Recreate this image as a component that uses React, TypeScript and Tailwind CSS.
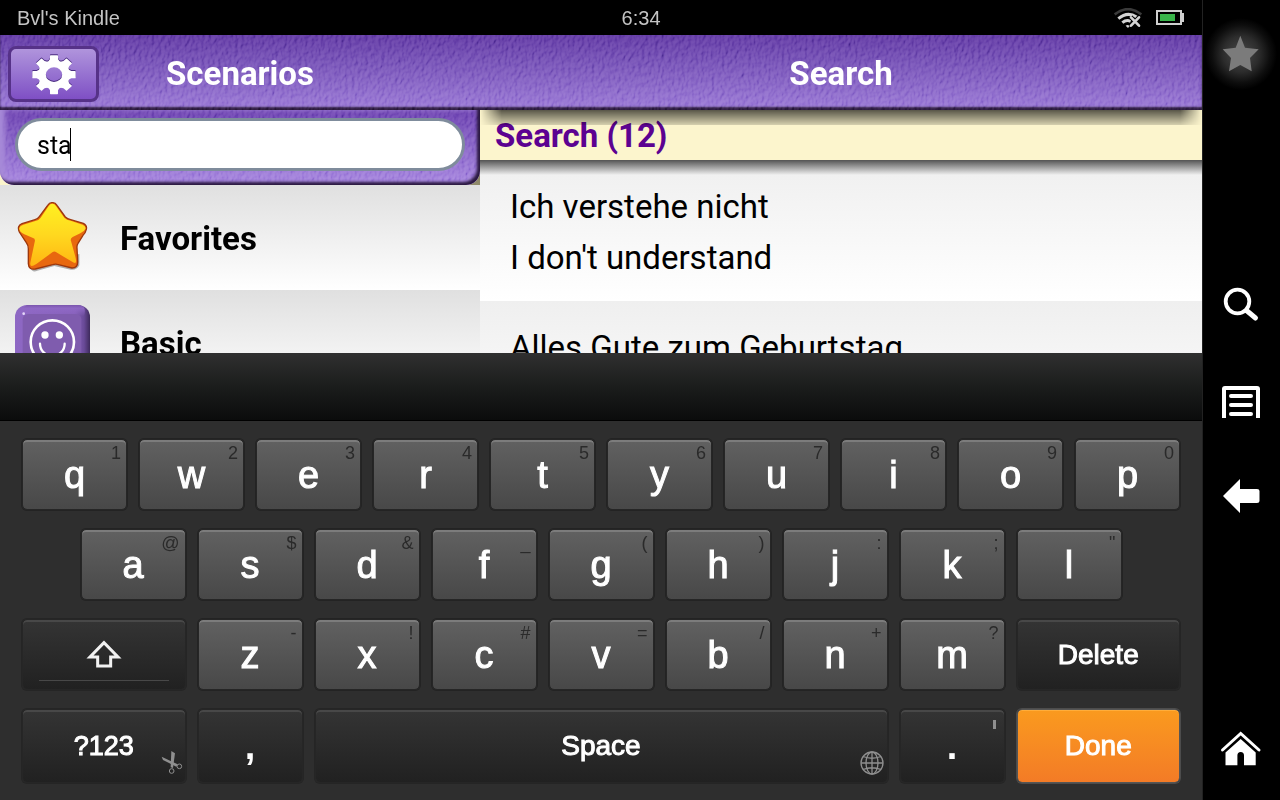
import { useState, type ReactNode } from 'react';

type KeyDef = { label: string; hint?: string };

const ROW_ONE: KeyDef[] = [
  { label: 'q', hint: '1' },
  { label: 'w', hint: '2' },
  { label: 'e', hint: '3' },
  { label: 'r', hint: '4' },
  { label: 't', hint: '5' },
  { label: 'y', hint: '6' },
  { label: 'u', hint: '7' },
  { label: 'i', hint: '8' },
  { label: 'o', hint: '9' },
  { label: 'p', hint: '0' },
];

const ROW_TWO: KeyDef[] = [
  { label: 'a', hint: '@' },
  { label: 's', hint: '$' },
  { label: 'd', hint: '&' },
  { label: 'f', hint: '_' },
  { label: 'g', hint: '(' },
  { label: 'h', hint: ')' },
  { label: 'j', hint: ':' },
  { label: 'k', hint: ';' },
  { label: 'l', hint: '"' },
];

const ROW_THREE: KeyDef[] = [
  { label: 'z', hint: '-' },
  { label: 'x', hint: '!' },
  { label: 'c', hint: '#' },
  { label: 'v', hint: '=' },
  { label: 'b', hint: '/' },
  { label: 'n', hint: '+' },
  { label: 'm', hint: '?' },
];

const PHRASES = [
  ['Ich verstehe nicht', "I don't understand"],
  ['Alles Gute zum Geburtstag'],
];

/* Embossed leather grain laid over the purple surfaces. */
function Grain({ id }: { id: string }) {
  return (
    <svg aria-hidden="true" className="pointer-events-none absolute inset-0 h-full w-full opacity-50 mix-blend-soft-light">
      <filter id={id} x="0" y="0" width="100%" height="100%">
        <feTurbulence type="fractalNoise" baseFrequency="0.3 0.2" numOctaves="2" seed="7" result="noise" />
        <feDiffuseLighting in="noise" surfaceScale="2" diffuseConstant="0.7" lightingColor="#ffffff">
          <feDistantLight azimuth="215" elevation="42" />
        </feDiffuseLighting>
      </filter>
      <rect width="100%" height="100%" filter={`url(#${id})`} />
    </svg>
  );
}

function WifiOffIcon() {
  return (
    <svg aria-hidden="true" viewBox="0 0 84 60" className="h-5 w-7" fill="none" strokeLinecap="butt">
      <path d="M2 19Q42-12 82 19" stroke="#3a3a3a" strokeWidth="8" />
      <path d="M13 32Q40 9 68 27" stroke="#d4d4d4" strokeWidth="9" />
      <path d="M25 44Q37 34 50 40" stroke="#d4d4d4" strokeWidth="9" />
      <path d="M35 53Q41 48 47 54L42 60Z" fill="#d4d4d4" />
      <path d="M50 27L76 54M76 27L50 54" stroke="#000" strokeWidth="14" />
      <path d="M51 28L75 53M75 28L51 53" stroke="#d4d4d4" strokeWidth="8" strokeLinecap="round" />
    </svg>
  );
}

function BatteryIcon() {
  return (
    <svg aria-hidden="true" viewBox="0 0 28 15" className="h-[15px] w-7">
      <path d="M1 1H25V14H1Z" fill="none" stroke="#cfcfcf" strokeWidth="2" />
      <path d="M25 3H28V12H25Z" fill="#cfcfcf" />
      <path d="M4 4H19V11H4Z" fill="#39b54a" />
    </svg>
  );
}

function GearIcon() {
  const teeth = [0, 45, 90, 135, 180, 225, 270, 315];
  return (
    <svg aria-hidden="true" viewBox="-72 -72 144 144" className="h-12 w-12 drop-shadow-[0_-1px_0_#4a2c80]">
      <g transform="translate(0 2) scale(1 .9)">
        <circle r="36" fill="none" stroke="#fff" strokeWidth="23" />
        {teeth.map((angle) => (
          <path key={angle} d="M-18-42L-12-52V-63Q-12-65-10-65H10Q12-65 12-63V-52L18-42Z" fill="#fff" transform={`rotate(${angle})`} />
        ))}
      </g>
    </svg>
  );
}

function GoldStarIcon() {
  return (
    <svg aria-hidden="true" viewBox="45 60 225 225" className="h-[75px] w-[75px] shrink-0">
      <defs>
        <linearGradient id="gold" x1="0" y1="0" x2="0" y2="1">
          <stop offset="0" stopColor="#fff021" />
          <stop offset="0.5" stopColor="#ffd81f" />
          <stop offset="1" stopColor="#ffb612" />
        </linearGradient>
      </defs>
      <path
        d="M88 262Q98 280 112 272L163 258L212 269Q230 272 238 256L238 222Z"
        fill="#000"
        opacity="0.3"
      />
      <path
        d="M156 68Q165 66 171 76L196 111Q202 117 212 119L250 130Q262 136 259 148Q256 160 249 166L234 190Q230 196 231 204L233 246Q233 264 216 264L172 253Q165 251 158 254L106 267Q86 270 85 251V206Q85 196 79 188L58 156Q50 137 66 131L105 119Q113 117 118 110L143 76Q149 67 156 68Z"
        fill="#e8680f"
        stroke="#9c370c"
        strokeWidth="4"
      />
      <path
        d="M156 71Q163 70 168 78L193 113Q200 120 212 122L248 134Q259 139 256 147Q253 154 241 160L218 171Q210 175 213 183L226 230Q233 255 219 247L169 217Q163 212 157 217L109 252Q88 266 91 248L104 186Q107 176 99 174L73 163Q56 154 58 144Q60 136 70 134L106 123Q117 121 122 113L146 78Q151 71 156 71Z"
        fill="url(#gold)"
      />
    </svg>
  );
}

function SmileyTileIcon() {
  return (
    <svg aria-hidden="true" viewBox="45 375 225 225" className="h-[75px] w-[75px] shrink-0">
      <defs>
        <linearGradient id="tile" x1="0" y1="0" x2="1" y2="0">
          <stop offset="0" stopColor="#8e68c4" />
          <stop offset="0.8" stopColor="#8660ba" />
          <stop offset="0.92" stopColor="#694a98" />
          <stop offset="1" stopColor="#3e2a5c" />
        </linearGradient>
        <linearGradient id="tileTop" x1="0" y1="0" x2="0" y2="1">
          <stop offset="0" stopColor="#7a55ad" />
          <stop offset="0.3" stopColor="#9069c6" stopOpacity="0.9" />
          <stop offset="1" stopColor="#9069c6" stopOpacity="0" />
        </linearGradient>
      </defs>
      <rect x="45" y="375" width="225" height="225" rx="36" fill="url(#tile)" />
      <path d="M81 375H234Q262 377 252 408H63Q45 400 81 375Z" fill="url(#tileTop)" />
      <rect x="68" y="402" width="176" height="180" rx="16" fill="#7f5cae" />
      <circle cx="71" cy="401" r="4" fill="#e6d8fa" />
      <circle cx="157" cy="486" r="65" fill="none" stroke="#fff" strokeWidth="8" />
      <circle cx="135" cy="465" r="11" fill="#fff" />
      <circle cx="178" cy="465" r="11" fill="#fff" />
      <path d="M120 491A37 37 0 0 0 194 491" fill="none" stroke="#fff" strokeWidth="7" strokeLinecap="round" />
    </svg>
  );
}

function Key({ label, hint, className = 'col-span-2' }: KeyDef & { className?: string }) {
  return (
    <button
      type="button"
      className={`relative flex h-[71px] items-center justify-center rounded-[5px] border border-[#262626] bg-linear-to-b from-[#616161] to-[#484848] bg-clip-padding text-[38px] leading-none text-white shadow-[inset_0_2px_0_#7c7c7c,0_0_0_1px_#232323] [-webkit-text-stroke:1px_white] ${className}`}
    >
      {label}
      {hint && (
        <span className="absolute top-1 right-[5px] text-[18px] leading-none text-[#2a2a2a] [-webkit-text-stroke:0px]">{hint}</span>
      )}
    </button>
  );
}

function DarkKey({ label, className, children }: { label: string; className: string; children: ReactNode }) {
  return (
    <button
      type="button"
      aria-label={label}
      className={`relative flex items-center justify-center rounded-[5px] border border-[#262626] bg-linear-to-b from-[#343434] to-[#212121] bg-clip-padding leading-none text-white shadow-[inset_0_2px_0_#484848,0_0_0_1px_#252525] ${className}`}
    >
      {children}
    </button>
  );
}

function Keyboard() {
  return (
    <section aria-label="Keyboard" className="shrink-0">
      <div className="h-[68px] border-b border-black bg-linear-to-b from-[#303030] via-[#1b1d1c] via-50% to-[#0b0c0c]" />
      <div className="grid grid-cols-20 gap-x-[12px] gap-y-[19px] bg-[#2e2e2e] px-[22px] pt-[18px] pb-[17px]">
        {ROW_ONE.map((key) => (
          <Key key={key.label} {...key} />
        ))}
        {ROW_TWO.map((key, index) => (
          <Key key={key.label} {...key} className={index === 0 ? 'col-span-2 col-start-2' : 'col-span-2'} />
        ))}
        <DarkKey label="Shift" className="col-span-3 col-start-1 h-[71px]">
          <svg aria-hidden="true" viewBox="246 113 120 96" className="h-8 w-10">
            <path d="M306 124L264 167H287V194H326V167H348Z" fill="none" stroke="#f2f2f2" strokeWidth="9" />
          </svg>
          <span className="absolute inset-x-4 bottom-2 h-px bg-[#484848]" />
        </DarkKey>
        {ROW_THREE.map((key) => (
          <Key key={key.label} {...key} />
        ))}
        <DarkKey label="Delete" className="col-span-3 h-[71px] text-[28px] [-webkit-text-stroke:1px_white]">
          Delete
        </DarkKey>
        <DarkKey label="Symbols" className="col-span-3 h-[74px] text-[27px] [-webkit-text-stroke:1px_white]">
          ?123
          <svg aria-hidden="true" viewBox="480 450 66 75" className="absolute right-0.5 bottom-[7px] h-[25px] w-[22px]">
            <path d="M511 453L522 460L516 504L509 502Z" fill="#8f8f8f" />
            <path d="M482 470L486 480L526 500L530 493Z" fill="#8f8f8f" />
            <circle cx="512" cy="513" r="7" fill="none" stroke="#8f8f8f" strokeWidth="3" />
            <circle cx="535" cy="499" r="7" fill="none" stroke="#8f8f8f" strokeWidth="3" />
          </svg>
        </DarkKey>
        <DarkKey label="Comma" className="col-span-2 h-[74px] text-[38px] font-bold">
          ,
        </DarkKey>
        <DarkKey label="Space" className="col-span-10 h-[74px] text-[28px] [-webkit-text-stroke:1px_white]">
          Space
          <svg aria-hidden="true" viewBox="0 0 24 24" className="absolute right-[3px] bottom-[7px] h-6 w-6" fill="none" stroke="#8f8f8f" strokeWidth="1.3">
            <circle cx="12" cy="12" r="11" />
            <ellipse cx="12" cy="12" rx="6" ry="11" />
            <path d="M12 1V23M1 12H23M3 5.500Q12 9 21 5.500M3 18.500Q12 15 21 18.500" />
          </svg>
        </DarkKey>
        <DarkKey label="Period" className="col-span-2 h-[74px] text-[38px] font-bold">
          .
          <span className="absolute top-[10px] right-2 h-[9px] w-[3px] bg-[#8f8f8f]" />
        </DarkKey>
        <button
          type="button"
          className="col-span-3 flex h-[74px] items-center justify-center rounded-[5px] border border-[#555555] bg-linear-to-b from-[#fa9a1e] to-[#f37b26] bg-clip-padding text-[28px] leading-none text-white shadow-[inset_0_1px_0_#ffad3a,0_0_0_1px_#4c4c4c] [-webkit-text-stroke:1px_white]"
        >
          Done
        </button>
      </div>
    </section>
  );
}

function NavRail() {
  return (
    <nav aria-label="System" className="flex w-[78px] shrink-0 flex-col justify-between border-l border-[#222222] bg-black pt-[18px] pb-4">
      <button type="button" aria-label="Favorite">
        <svg aria-hidden="true" viewBox="0 0 77 72" className="h-[72px] w-full">
          <defs>
            <radialGradient id="glow">
              <stop offset="0" stopColor="#4a4a4a" />
              <stop offset="0.5" stopColor="#2c2c2c" />
              <stop offset="0.8" stopColor="#0e0e0e" />
              <stop offset="1" stopColor="#000" />
            </radialGradient>
          </defs>
          <circle cx="38" cy="36" r="36" fill="url(#glow)" />
          <path
            d="M37.300 17.700L42 29.700L55.700 31.300L47 40L48.700 53.300L37.300 47L26 53.300L28 40L19.700 31.300L32.700 29.700Z"
            fill="#7b7b7b"
          />
        </svg>
      </button>
      <div className="flex flex-col gap-12">
        <button type="button" aria-label="Search">
          <svg aria-hidden="true" viewBox="0 0 77 48" className="h-12 w-full" fill="none" stroke="#fff">
            <circle cx="34.500" cy="20.500" r="11.800" strokeWidth="3.800" />
            <path d="M43.500 29.500L52.500 37" strokeWidth="5" strokeLinecap="round" />
          </svg>
        </button>
        <button type="button" aria-label="Menu">
          <svg aria-hidden="true" viewBox="0 0 77 48" className="h-12 w-full" fill="none" stroke="#fff" strokeWidth="4">
            <path d="M21 41V12Q21 11 22 11H54Q55 11 55 12V41" />
            <path d="M28 19H48M28 28H48M28 37H48" strokeLinecap="round" />
          </svg>
        </button>
        <button type="button" aria-label="Back">
          <svg aria-hidden="true" viewBox="0 0 77 48" className="h-12 w-full" fill="#fff">
            <path d="M20 23L37 6V16H54Q56.500 16 56.500 18V28Q56.500 30 54 30H37V40Z" />
          </svg>
        </button>
      </div>
      <button type="button" aria-label="Home">
        <svg aria-hidden="true" viewBox="0 0 77 72" className="h-[72px] w-full">
          <path d="M19.500 38L37.700 21.500L56 38" fill="none" stroke="#fff" strokeWidth="3" strokeLinecap="round" />
          <path d="M22.500 53.300V40.500L37.700 27L52.700 40.500V53.300H41V43.500Q41 40 37.700 40T34.400 43.500V53.300Z" fill="#fff" />
        </svg>
      </button>
    </nav>
  );
}

function Category({ icon, name }: { icon: ReactNode; name: string }) {
  return (
    <li>
      <button
        type="button"
        className="flex h-[105px] w-full items-center gap-[30px] bg-linear-to-b from-[#e0e0e0] to-white px-[15px] font-[Roboto,sans-serif] text-[33px] font-bold text-black"
      >
        {icon}
        <span className="pt-[2px]">{name}</span>
      </button>
    </li>
  );
}

export default function App() {
  const [query, setQuery] = useState('sta');

  return (
    <div className="flex h-screen bg-black font-['Liberation_Sans',Arial,sans-serif]">
      <div className="flex min-w-0 flex-1 flex-col">
        <div className="grid h-[35px] shrink-0 grid-cols-[52.5%_1fr_auto] items-center pr-[18px] text-[20px] leading-none text-[#c4c4c4]">
          <span className="pl-[17px]">Bvl's Kindle</span>
          <span>6:34</span>
          <span className="flex items-center gap-[14px]">
            <WifiOffIcon />
            <BatteryIcon />
          </span>
        </div>

        <header className="relative grid h-[75px] shrink-0 grid-cols-[480px_1fr] bg-linear-to-b from-[#5c34a0] to-[#9673d4] font-[Roboto,sans-serif] text-[33px] font-bold text-white shadow-[inset_0_-3px_2px_#241536]">
          <Grain id="headerGrain" />
          <div className="relative grid grid-cols-[1fr_auto_1fr] items-center pt-[2px]">
            <button
              type="button"
              aria-label="Settings"
              className="ml-2 flex h-14 w-[91px] items-center justify-center rounded-lg border-3 border-[#563288] bg-linear-to-b from-[#b094dc] to-[#7f4fc4]"
            >
              <GearIcon />
            </button>
            <h1>Scenarios</h1>
          </div>
          <h1 className="relative flex items-center justify-center pt-[2px]">Search</h1>
        </header>

        <main className="grid min-h-0 flex-1 grid-cols-[480px_1fr] overflow-hidden font-[Roboto,sans-serif] text-black">
          <div className="min-h-0">
            <div className="bg-linear-to-r from-[#fbf4cb] from-50% to-[#8d8868]">
              <div className="relative h-[75px] overflow-hidden rounded-b-[14px] bg-linear-to-b from-[#663bac] to-[#a381de] px-[15px] pt-2 pb-[14px]">
                <Grain id="panelGrain" />
                <div className="absolute inset-0 rounded-b-[14px] shadow-[inset_-3px_-3px_3px_#2a1840,inset_5px_0_5px_#a78ad8]" />
                <input
                  aria-label="Search phrases"
                  type="text"
                  value={query}
                  onChange={(event) => setQuery(event.target.value)}
                  className="relative block h-[53px] w-full rounded-full border-3 border-[#7f8c9c] bg-white px-[19px] pt-[2px] text-[25px] caret-transparent outline-none"
                />
                <span className="absolute top-[18px] left-[70px] h-[33px] w-px bg-black" />
              </div>
            </div>
            <ul>
              <Category icon={<GoldStarIcon />} name="Favorites" />
              <Category icon={<SmileyTileIcon />} name="Basic" />
            </ul>
          </div>

          <div className="relative min-h-0">
            <div className="pointer-events-none absolute inset-x-0 top-0 h-[15px] bg-linear-to-b from-black/65 to-black/15 mask-r-from-97% mask-l-from-97%" />
            <h2 className="h-[50px] bg-[#fcf5cd] px-[15px] pt-[1px] text-[33px] leading-[50px] font-bold text-[#5c0291]">Search (12)</h2>
            <ul className="relative text-[33px] leading-[51px]">
              {PHRASES.map((lines) => (
                <li key={lines[0]} className="bg-linear-to-b from-[#efefef] to-white bg-[length:100%_141px] px-[30px] pt-[21px] pb-[18px]">
                  {lines.map((line) => (
                    <p key={line}>{line}</p>
                  ))}
                </li>
              ))}
              <li aria-hidden="true" className="pointer-events-none absolute inset-x-0 top-0 h-[15px] bg-linear-to-b from-black/65 to-transparent" />
            </ul>
          </div>
        </main>

        <Keyboard />
      </div>
      <NavRail />
    </div>
  );
}
